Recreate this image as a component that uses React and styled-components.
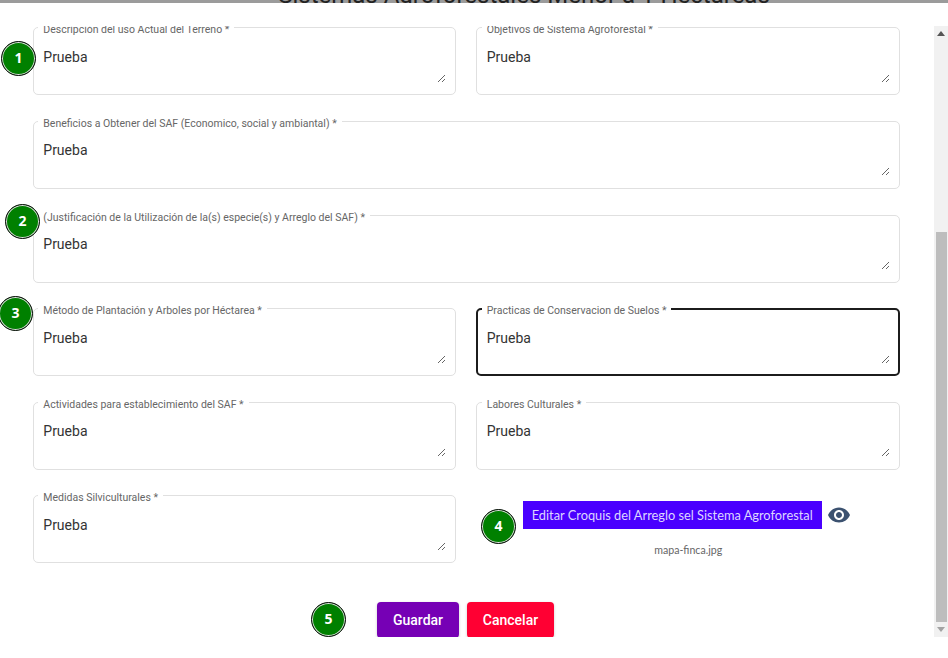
import React from "react";
import styled, { createGlobalStyle } from "styled-components";
import { MdVisibility } from "react-icons/md";

const GlobalStyle = createGlobalStyle`
  html, body {
    margin: 0;
    height: 100%;
    overflow: hidden;
    background: #fff;
    font-family: Roboto, "Liberation Sans", sans-serif;
  }
`;

const Page = styled.div`
  width: 948px;
  height: 658px;
  display: flex;
  flex-direction: column;
  background: #fff;
  overflow: hidden;
`;

const TopEdge = styled.div`
  height: 3px;
  padding-left: 100px;
  background: #9b9b9b;
  display: flex;
  justify-content: center;
  align-items: flex-end;
  overflow: hidden;
`;

const Title = styled.h2`
  margin: 0 0 -6px;
  flex: none;
  font-size: 24px;
  line-height: 28px;
  font-weight: 400;
  color: #222;
  white-space: nowrap;
`;

const Spacer = styled.div`
  height: 23px;
`;

const Body = styled.div`
  display: flex;
  height: 611px;
`;

const ScrollArea = styled.div`
  flex: 1;
  overflow: hidden;
`;

const Form = styled.form`
  position: relative;
  display: flex;
  flex-direction: column;
  gap: 25.6px;
  padding: 1.45px 34px 0 33px;
`;

const Row = styled.div`
  display: grid;
  grid-template-columns: 423px 1fr;
  column-gap: 20.45px;
`;

const Field = styled.div`
  position: relative;
  grid-column: ${(props) => (props.$wide ? "1 / -1" : "auto")};
  box-sizing: border-box;
  height: 68px;
  padding: ${(props) => (props.$focused ? "18.35px 8px 0 8.3px" : "19.35px 9px 0 9.3px")};
  border: ${(props) => (props.$focused ? "2px solid #1c1c1c" : "1px solid #e0e0e0")};
  border-radius: 5px;
`;

const Label = styled.label`
  position: absolute;
  top: ${(props) => (props.$focused ? "-5px" : "-4px")};
  left: ${(props) => (props.$focused ? "3.3px" : "4.3px")};
  padding: 0 5px;
  background: #fff;
  font-size: 10.5px;
  line-height: 12px;
  color: #666;
  white-space: nowrap;
`;

const Area = styled.textarea`
  display: block;
  box-sizing: border-box;
  width: 100%;
  height: 35px;
  padding: 0;
  border: 0;
  outline: 0;
  resize: vertical;
  font-family: Roboto, "Liberation Sans", sans-serif;
  font-size: 14px;
  line-height: 18px;
  color: #333;
  background: transparent;
`;

const UploadCell = styled.div`
  display: flex;
  flex-direction: column;
  align-items: center;
  padding-top: 5.5px;
`;

const UploadRow = styled.div`
  display: flex;
  align-items: center;
  gap: 5px;
  padding-right: 3px;
`;

const UploadButton = styled.button`
  width: 299px;
  height: 28px;
  padding: 0;
  border: 0;
  background: #4a00ff;
  color: #ddd6ff;
  font-family: Lato, "Noto Sans", sans-serif;
  font-size: 12.8px;
  white-space: nowrap;
`;

const EyeIcon = styled(MdVisibility)`
  display: block;
  color: #3c5270;
`;

const FileName = styled.span`
  margin-top: 15px;
  font-family: Lato, "Noto Sans", sans-serif;
  font-size: 10.6px;
  line-height: 13px;
  color: #666;
`;

const Actions = styled.div`
  display: flex;
  justify-content: center;
  gap: 8px;
  margin-top: 13px;
  padding-right: 2px;
`;

const ActionButton = styled.button`
  width: ${(props) => props.$width}px;
  height: 36px;
  padding: 0;
  border: 0;
  border-radius: 4px;
  background: ${(props) => props.$color};
  color: #fff;
  font-family: Roboto, "Liberation Sans", sans-serif;
  font-size: 14px;
  font-weight: 500;
  box-shadow: 0 1px 3px rgba(0, 0, 0, 0.2);
`;

const Badge = styled.span`
  position: absolute;
  left: ${(props) => props.$left}px;
  top: ${(props) => props.$top}px;
  box-sizing: border-box;
  width: 35px;
  height: 35px;
  padding-bottom: 2px;
  display: flex;
  align-items: center;
  justify-content: center;
  border: 1px solid #111;
  border-radius: 50%;
  background: #008000;
  box-shadow: inset 0 0 0 1px #ddd;
  color: #fff;
  font-family: "Noto Sans", sans-serif;
  font-size: 14px;
  line-height: 1;
  font-weight: 700;
`;

const Scrollbar = styled.div`
  width: 14px;
  display: flex;
  flex-direction: column;
  background: #f1f1f1;
`;

const ScrollArrow = styled.div`
  height: 15px;
  display: flex;
  align-items: center;
  justify-content: center;
  flex: none;
`;

const ArrowGlyph = styled.svg`
  width: 8px;
  height: 5px;
  display: block;
  fill: ${(props) => props.$color};
`;

const ScrollTrack = styled.div`
  flex: 1;
  display: flex;
  flex-direction: column;
  justify-content: flex-end;
`;

const ScrollThumb = styled.div`
  height: 390px;
  margin: 0 1px 0 2px;
  background: #bdbdbd;
`;

const Text = ({ label, wide, focused }) => (
  <Field $wide={wide} $focused={focused}>
    <Label $focused={focused}>{label}</Label>
    <Area readOnly defaultValue="Prueba" />
  </Field>
);

export default function App() {
  return (
    <Page>
      <GlobalStyle />
      <TopEdge>
        <Title>Sistemas Agroforestales Menor a 1 Hectareas</Title>
      </TopEdge>
      <Spacer />
      <Body>
        <ScrollArea>
          <Form>
            <Row>
              <Text label="Descripción del uso Actual del Terreno *" />
              <Text label="Objetivos de Sistema Agroforestal *" />
            </Row>
            <Row>
              <Text wide label="Beneficios a Obtener del SAF (Economico, social y ambiantal) *" />
            </Row>
            <Row>
              <Text wide label="(Justificación de la Utilización de la(s) especie(s) y Arreglo del SAF) *" />
            </Row>
            <Row>
              <Text label="Método de Plantación y Arboles por Héctarea *" />
              <Text focused label="Practicas de Conservacion de Suelos *" />
            </Row>
            <Row>
              <Text label="Actividades para establecimiento del SAF *" />
              <Text label="Labores Culturales *" />
            </Row>
            <Row>
              <Text label="Medidas Silviculturales *" />
              <UploadCell>
                <UploadRow>
                  <UploadButton type="button">Editar Croquis del Arreglo sel Sistema Agroforestal</UploadButton>
                  <EyeIcon size={24} />
                </UploadRow>
                <FileName>mapa-finca.jpg</FileName>
              </UploadCell>
            </Row>
            <Actions>
              <ActionButton type="button" $width={82} $color="#7600b5">Guardar</ActionButton>
              <ActionButton type="button" $width={87} $color="#ff0033">Cancelar</ActionButton>
            </Actions>
            <Badge $left={1} $top={15}>1</Badge>
            <Badge $left={5} $top={178}>2</Badge>
            <Badge $left={-2} $top={270}>3</Badge>
            <Badge $left={481} $top={483}>4</Badge>
            <Badge $left={311} $top={576}>5</Badge>
          </Form>
        </ScrollArea>
        <Scrollbar>
          <ScrollArrow>
            <ArrowGlyph viewBox="0 0 8 5" $color="#555"><path d="M4 0l4 5H0z" /></ArrowGlyph>
          </ScrollArrow>
          <ScrollTrack>
            <ScrollThumb />
          </ScrollTrack>
          <ScrollArrow>
            <ArrowGlyph viewBox="0 0 8 5" $color="#a3a3a3"><path d="M0 0h8L4 5z" /></ArrowGlyph>
          </ScrollArrow>
        </Scrollbar>
      </Body>
    </Page>
  );
}
